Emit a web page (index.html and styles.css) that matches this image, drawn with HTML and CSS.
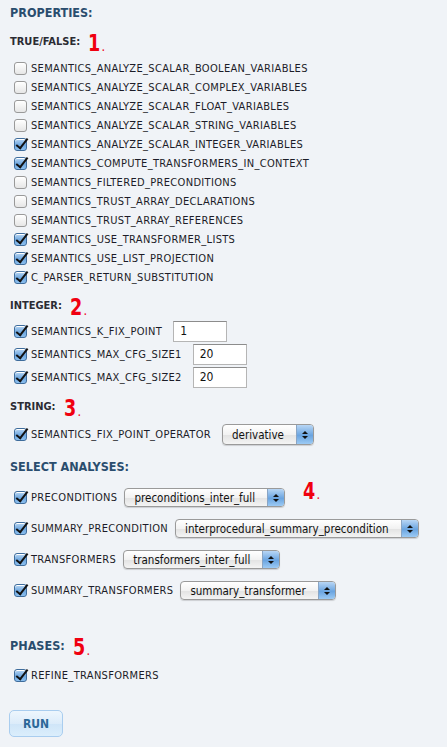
FILE: index.html
```html
<!DOCTYPE html>
<html>
<head>
<meta charset="utf-8">
<title>Properties</title>
<link rel="stylesheet" href="styles.css">
</head>
<body>
<div class="page">
  <h2 class="main main-first">PROPERTIES:</h2>

  <h3 class="sub sub-first">TRUE/FALSE: <span class="num">1<span class="dot">.</span></span></h3>
  <ul class="list list-bool">
    <li class="row"><span class="cb"></span><span class="lbl">SEMANTICS_ANALYZE_SCALAR_BOOLEAN_VARIABLES</span></li>
    <li class="row"><span class="cb"></span><span class="lbl">SEMANTICS_ANALYZE_SCALAR_COMPLEX_VARIABLES</span></li>
    <li class="row"><span class="cb"></span><span class="lbl">SEMANTICS_ANALYZE_SCALAR_FLOAT_VARIABLES</span></li>
    <li class="row"><span class="cb"></span><span class="lbl">SEMANTICS_ANALYZE_SCALAR_STRING_VARIABLES</span></li>
    <li class="row"><span class="cb on"></span><span class="lbl">SEMANTICS_ANALYZE_SCALAR_INTEGER_VARIABLES</span></li>
    <li class="row"><span class="cb on"></span><span class="lbl">SEMANTICS_COMPUTE_TRANSFORMERS_IN_CONTEXT</span></li>
    <li class="row"><span class="cb"></span><span class="lbl">SEMANTICS_FILTERED_PRECONDITIONS</span></li>
    <li class="row"><span class="cb"></span><span class="lbl">SEMANTICS_TRUST_ARRAY_DECLARATIONS</span></li>
    <li class="row"><span class="cb"></span><span class="lbl">SEMANTICS_TRUST_ARRAY_REFERENCES</span></li>
    <li class="row"><span class="cb on"></span><span class="lbl">SEMANTICS_USE_TRANSFORMER_LISTS</span></li>
    <li class="row"><span class="cb on"></span><span class="lbl">SEMANTICS_USE_LIST_PROJECTION</span></li>
    <li class="row"><span class="cb on"></span><span class="lbl">C_PARSER_RETURN_SUBSTITUTION</span></li>
  </ul>

  <h3 class="sub sub-int">INTEGER: <span class="num">2<span class="dot">.</span></span></h3>
  <ul class="list list-int">
    <li class="row row-field"><span class="cb on"></span><span class="lbl">SEMANTICS_K_FIX_POINT</span><span class="field">1</span></li>
    <li class="row row-field"><span class="cb on"></span><span class="lbl">SEMANTICS_MAX_CFG_SIZE1</span><span class="field">20</span></li>
    <li class="row row-field"><span class="cb on"></span><span class="lbl">SEMANTICS_MAX_CFG_SIZE2</span><span class="field">20</span></li>
  </ul>

  <h3 class="sub sub-str">STRING: <span class="num">3<span class="dot">.</span></span></h3>
  <ul class="list list-str">
    <li class="row row-field"><span class="cb on"></span><span class="lbl">SEMANTICS_FIX_POINT_OPERATOR</span><span class="select select-tall"><span class="val">derivative</span><span class="arrows"><span class="up"></span><span class="down"></span></span></span></li>
  </ul>

  <h2 class="main main-sel">SELECT ANALYSES:</h2>
  <ul class="list list-an">
    <li class="row row-an"><span class="cb on"></span><span class="lbl">PRECONDITIONS</span><span class="select"><span class="val">preconditions_inter_full</span><span class="arrows"><span class="up"></span><span class="down"></span></span></span><span class="num num-four">4<span class="dot">.</span></span></li>
    <li class="row row-an"><span class="cb on"></span><span class="lbl">SUMMARY_PRECONDITION</span><span class="select"><span class="val">interprocedural_summary_precondition</span><span class="arrows"><span class="up"></span><span class="down"></span></span></span></li>
    <li class="row row-an"><span class="cb on"></span><span class="lbl">TRANSFORMERS</span><span class="select"><span class="val">transformers_inter_full</span><span class="arrows"><span class="up"></span><span class="down"></span></span></span></li>
    <li class="row row-an"><span class="cb on"></span><span class="lbl">SUMMARY_TRANSFORMERS</span><span class="select"><span class="val">summary_transformer</span><span class="arrows"><span class="up"></span><span class="down"></span></span></span></li>
  </ul>

  <h2 class="main main-ph">PHASES: <span class="num">5<span class="dot">.</span></span></h2>
  <ul class="list list-ph">
    <li class="row"><span class="cb on"></span><span class="lbl">REFINE_TRANSFORMERS</span></li>
  </ul>

  <button class="run">RUN</button>
</div>
</body>
</html>
```

FILE: styles.css
```css
html, body {
  margin: 0;
  padding: 0;
  background: #f0f3f7;
}
.page {
  padding: 0 0 0 9px;
  font-family: "DejaVu Sans Condensed", "DejaVu Sans", sans-serif;
  color: #1c1c28;
}
.main {
  margin: 0;
  font-size: 12.5px;
  font-weight: bold;
  color: #2a4d6e;
  line-height: 20px;
  height: 20px;
  display: flex;
  align-items: center;
  padding-left: 1px;
}
.main-first { height: 26px; line-height: 26px; }
.main-sel { margin-top: 11px; }
.main-ph { margin-top: 30px; }
.sub {
  margin: 0;
  font-size: 11px;
  font-weight: bold;
  color: #2b2b33;
  line-height: 20px;
  height: 20px;
  display: flex;
  align-items: center;
  padding-left: 1px;
}
.sub-first { margin-top: 6px; }
.sub-int { margin-top: 9px; }
.sub-str { margin-top: 8px; }
.num {
  color: #f00010;
  font-family: "DejaVu Sans Condensed", sans-serif;
  font-weight: bold;
  font-size: 23px;
  line-height: 20px;
  margin-left: 8px;
  position: relative;
  top: 3px;
  transform: scaleX(0.85);
  transform-origin: left center;
  display: inline-block;
}
.num .dot { font-size: 9px; margin-left: 2px; }
.list {
  list-style: none;
  margin: 0;
  padding: 0;
}
.list-bool { margin-top: 7px; }
.list-int { margin-top: 4px; }
.list-str { margin-top: 6px; }
.list-an { margin-top: 5px; }
.list-ph { margin-top: 10px; }
.row {
  display: flex;
  align-items: center;
  height: 19px;
  font-size: 11px;
  padding-left: 5px;
}
.row-field { height: 23px; }
.row-an { height: 31px; }
.cb {
  width: 11px;
  height: 11px;
  border: 1px solid #999;
  border-radius: 3px;
  background: linear-gradient(#ffffff, #e6e6e6);
  box-shadow: inset 0 1px 0 #fff;
  margin-right: 4px;
  flex: none;
  position: relative;
}
.cb.on {
  border-color: #3e6c9c;
  background: linear-gradient(#b7d6f4, #6ea6de 55%, #8cc0f0);
}
.cb.on::after {
  content: "";
  position: absolute;
  left: 4px;
  top: -3px;
  width: 4px;
  height: 11px;
  border-right: 2.5px solid #111;
  border-bottom: 2.5px solid #111;
  transform: rotate(38deg);
}
.lbl { white-space: nowrap; letter-spacing: 0.33px; }
.field {
  margin-left: 11px;
  width: 46px;
  height: 19px;
  border: 1px solid #b5b5b5;
  border-top-color: #8c8c8c;
  background: #fff;
  font-size: 12px;
  line-height: 19px;
  padding-left: 6px;
  color: #111;
}
.select {
  margin-left: 7px;
  display: flex;
  height: 17px;
  border: 1px solid #9a9a9a;
  border-radius: 4px;
  background: linear-gradient(#ffffff, #f2f2f2 50%, #e2e2e2 51%, #f4f4f4);
  box-shadow: 0 1px 1px rgba(0,0,0,0.15);
  overflow: hidden;
  font-size: 11.5px;
}
.select-tall { height: 19px; margin-left: 11px; }
.select .val {
  padding: 0 12px 0 9px;
  display: flex;
  align-items: center;
  color: #111;
}
.select .arrows {
  width: 16px;
  border-left: 1px solid #8aa5c4;
  background: linear-gradient(#b8d6f5, #6aa4e0 55%, #9ccaf4);
  display: flex;
  flex-direction: column;
  align-items: center;
  justify-content: center;
  gap: 2px;
}
.up, .down {
  width: 0; height: 0;
  border-left: 3px solid transparent;
  border-right: 3px solid transparent;
}
.up { border-bottom: 3px solid #111; }
.down { border-top: 3px solid #111; }
.num-four { margin-left: 18px; top: -4px; }
.run {
  margin-top: 25px;
  margin-left: 0;
  width: 54px;
  height: 27px;
  border: 1px solid #a9cdef;
  border-radius: 5px;
  background: linear-gradient(#eef6fd, #dcecfa 50%, #cfe5f8 51%, #dbeefc);
  color: #2c6898;
  font-family: "DejaVu Sans Condensed", sans-serif;
  font-weight: bold;
  font-size: 12px;
  padding: 0;
}
```
